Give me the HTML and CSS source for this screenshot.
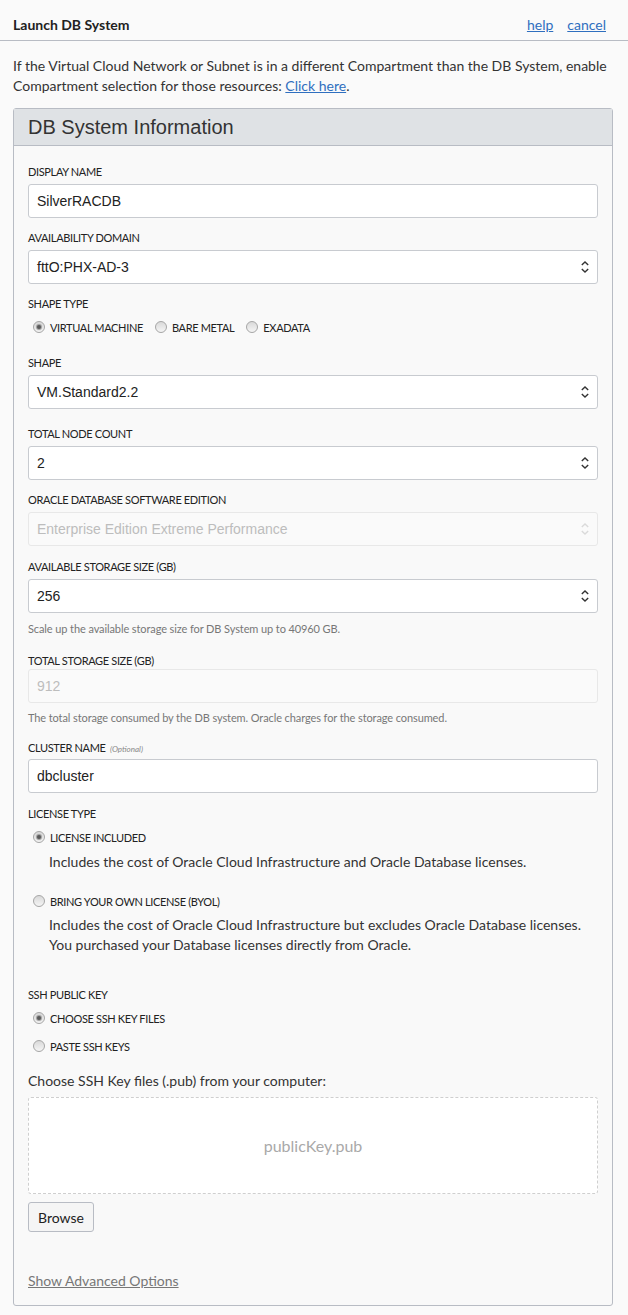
FILE: index.html
```html
<!DOCTYPE html>
<html lang="en">
<head>
    <meta charset="UTF-8">
    <meta name="viewport" content="width=device-width, initial-scale=1.0">
    <title>Launch DB System</title>
    <link rel="stylesheet" href="styles.css">
</head>
<body>
    <header class="topbar">
        <h1>Launch DB System</h1>
        <nav class="topbar-links">
            <a href="#">help</a>
            <a href="#">cancel</a>
        </nav>
    </header>

    <p class="intro">If the Virtual Cloud Network or Subnet is in a different Compartment than the DB System, enable Compartment selection for those resources: <a href="#">Click here</a>.</p>

    <section class="panel">
        <div class="panel-head">
            <h2>DB System Information</h2>
        </div>
        <div class="panel-body">
            <div class="field">
                <label class="field-label">Display Name</label>
                <div class="control">SilverRACDB</div>
            </div>

            <div class="field">
                <label class="field-label">Availability Domain</label>
                <div class="control select">
                    <span>fttO:PHX-AD-3</span>
                    <svg class="arrows" width="10" height="14" viewBox="0 0 10 14"><path d="M1.8 5 L5 2 L8.2 5 M1.8 9 L5 12 L8.2 9" fill="none" stroke="#333" stroke-width="1.4"/></svg>
                </div>
            </div>

            <div class="field field-radios">
                <label class="field-label">Shape Type</label>
                <div class="radio-row">
                    <span class="radio"><span class="dot checked"></span>Virtual Machine</span>
                    <span class="radio"><span class="dot"></span>Bare Metal</span>
                    <span class="radio"><span class="dot"></span>Exadata</span>
                </div>
            </div>

            <div class="field field-shape">
                <label class="field-label">Shape</label>
                <div class="control select">
                    <span>VM.Standard2.2</span>
                    <svg class="arrows" width="10" height="14" viewBox="0 0 10 14"><path d="M1.8 5 L5 2 L8.2 5 M1.8 9 L5 12 L8.2 9" fill="none" stroke="#333" stroke-width="1.4"/></svg>
                </div>
            </div>

            <div class="field">
                <label class="field-label">Total Node Count</label>
                <div class="control select">
                    <span>2</span>
                    <svg class="arrows" width="10" height="14" viewBox="0 0 10 14"><path d="M1.8 5 L5 2 L8.2 5 M1.8 9 L5 12 L8.2 9" fill="none" stroke="#333" stroke-width="1.4"/></svg>
                </div>
            </div>

            <div class="field field-edition">
                <label class="field-label">Oracle Database Software Edition</label>
                <div class="control select disabled">
                    <span>Enterprise Edition Extreme Performance</span>
                    <svg class="arrows" width="10" height="14" viewBox="0 0 10 14"><path d="M1.8 5 L5 2 L8.2 5 M1.8 9 L5 12 L8.2 9" fill="none" stroke="#dadada" stroke-width="1.4"/></svg>
                </div>
            </div>

            <div class="field">
                <label class="field-label">Available Storage Size (GB)</label>
                <div class="control select">
                    <span>256</span>
                    <svg class="arrows" width="10" height="14" viewBox="0 0 10 14"><path d="M1.8 5 L5 2 L8.2 5 M1.8 9 L5 12 L8.2 9" fill="none" stroke="#333" stroke-width="1.4"/></svg>
                </div>
                <p class="help">Scale up the available storage size for DB System up to 40960 GB.</p>
            </div>

            <div class="field field-total">
                <label class="field-label">Total Storage Size (GB)</label>
                <div class="control disabled">912</div>
                <p class="help">The total storage consumed by the DB system. Oracle charges for the storage consumed.</p>
            </div>

            <div class="field field-cluster">
                <label class="field-label">Cluster Name <em class="optional">(Optional)</em></label>
                <div class="control">dbcluster</div>
            </div>

            <div class="field field-license">
                <label class="field-label">License Type</label>
                <div class="option">
                    <span class="radio"><span class="dot checked"></span>License Included</span>
                    <p class="option-desc">Includes the cost of Oracle Cloud Infrastructure and Oracle Database licenses.</p>
                </div>
                <div class="option option-byol">
                    <span class="radio"><span class="dot"></span>Bring Your Own License (BYOL)</span>
                    <p class="option-desc">Includes the cost of Oracle Cloud Infrastructure but excludes Oracle Database licenses. You purchased your Database licenses directly from Oracle.</p>
                </div>
            </div>

            <div class="field field-ssh">
                <label class="field-label">SSH Public Key</label>
                <div class="option">
                    <span class="radio"><span class="dot checked"></span>Choose SSH Key Files</span>
                </div>
                <div class="option option-paste">
                    <span class="radio"><span class="dot"></span>Paste SSH Keys</span>
                </div>
                <p class="choose-text">Choose SSH Key files (.pub) from your computer:</p>
                <div class="dropzone">publicKey.pub</div>
                <button class="browse">Browse</button>
            </div>

            <a class="advanced" href="#">Show Advanced Options</a>
        </div>
    </section>
</body>
</html>
```

FILE: styles.css
```css
* {
    box-sizing: border-box;
    margin: 0;
    padding: 0;
}
body {
    font-family: Lato, "Noto Sans", sans-serif;
    font-size: 14px;
    color: #333;
    background: #fafafa;
}
a {
    color: #2f6fbf;
}
.topbar {
    display: flex;
    justify-content: space-between;
    align-items: center;
    height: 41px;
    padding: 8px 22px 0 13px;
    border-bottom: 1px solid #b8bcc4;
}
.topbar h1 {
    font-size: 14px;
    font-weight: 700;
    color: #222;
}
.topbar-links {
    display: flex;
    gap: 14px;
}
.topbar-links a {
    font-size: 14px;
}
.intro {
    line-height: 20px;
    margin: 15px 12px 12px 13px;
}
.panel {
    margin: 0 15px 10px 13px;
    border: 1px solid #b8bcc4;
    border-radius: 3px;
    background: #f9f9f9;
}
.panel-head {
    height: 37px;
    background: #dfe2e5;
    border-bottom: 1px solid #b8bcc4;
    padding-left: 14px;
}
.panel-head h2 {
    font-family: "Liberation Sans", Arial, sans-serif;
    font-size: 20px;
    font-weight: 400;
    line-height: 36px;
    color: #333;
}
.panel-body {
    padding: 18px 14px 14px;
}
.field {
    margin-bottom: 12px;
}
.field-label {
    display: block;
    font-size: 11px;
    line-height: 16px;
    letter-spacing: -0.35px;
    text-transform: uppercase;
    color: #222;
    margin-bottom: 4px;
}
.optional {
    font-size: 8px;
    line-height: 1;
    letter-spacing: 0;
    color: #888;
    text-transform: none;
    margin-left: 2px;
}
.control {
    height: 34px;
    background: #fff;
    border: 1px solid #c8cbd0;
    border-radius: 3px;
    padding: 0 8px;
    font-family: "Liberation Sans", Arial, sans-serif;
    font-size: 14px;
    line-height: 32px;
    color: #222;
}
.select {
    display: flex;
    justify-content: space-between;
    align-items: center;
    padding-right: 7px;
}
.control.disabled {
    background: #fafafa;
    border-color: #e8e8e8;
    color: #bdbdbd;
}
.field-radios {
    margin-bottom: 19px;
}
.radio-row {
    display: flex;
    margin-top: 8px;
    padding-left: 5px;
    gap: 12px;
}
.radio {
    display: flex;
    align-items: center;
    font-size: 11px;
    line-height: 16px;
    letter-spacing: -0.35px;
    text-transform: uppercase;
    color: #222;
}
.dot {
    position: relative;
    width: 12px;
    height: 12px;
    margin: -3px 5px 0 0;
    border: 1px solid #a6a6a6;
    border-radius: 50%;
    background: linear-gradient(#d9d9d9, #f5f5f5);
}
.dot.checked::after {
    content: "";
    position: absolute;
    left: 3px;
    top: 3px;
    width: 4px;
    height: 4px;
    border-radius: 50%;
    background: #5a5a5a;
    box-shadow: 0 0 1px 1px #999;
}
.field-shape {
    margin-bottom: 17px;
}
.field-edition {
    margin-bottom: 13px;
}
.help {
    font-size: 11px;
    line-height: 16px;
    letter-spacing: -0.1px;
    color: #777;
    margin-top: 8px;
}
.field-total {
    margin-top: 16px;
}
.field-total .field-label {
    margin-bottom: 0;
}
.field-total .help {
    margin-top: 7px;
}
.field-cluster {
    margin-top: 14px;
    margin-bottom: 13px;
}
.field-cluster .field-label {
    margin-bottom: 3px;
}
.option {
    padding-left: 5px;
    margin-top: 8px;
}
.option-desc {
    line-height: 20px;
    margin: 6px 0 0 16px;
}
.option-byol {
    margin-top: 22px;
}
.option-byol .option-desc {
    margin-top: 5px;
}
.field-ssh {
    margin-top: 32px;
    margin-bottom: 0;
}
.option-paste {
    margin-top: 12px;
}
.choose-text {
    line-height: 20px;
    margin-top: 16px;
}
.dropzone {
    height: 97px;
    margin-top: 6px;
    background: #fff;
    border: 1px dashed #cfcfcf;
    border-radius: 3px;
    display: flex;
    align-items: center;
    justify-content: center;
    font-size: 16px;
    color: #a9a9a9;
}
.browse {
    display: block;
    height: 30px;
    width: 66px;
    margin-top: 8px;
    background: #f5f5f5;
    border: 1px solid #b8bcc4;
    border-radius: 3px;
    font-family: inherit;
    font-size: 14px;
    color: #222;
}
.advanced {
    display: inline-block;
    margin-top: 39px;
    line-height: 20px;
    color: #777;
}
```
